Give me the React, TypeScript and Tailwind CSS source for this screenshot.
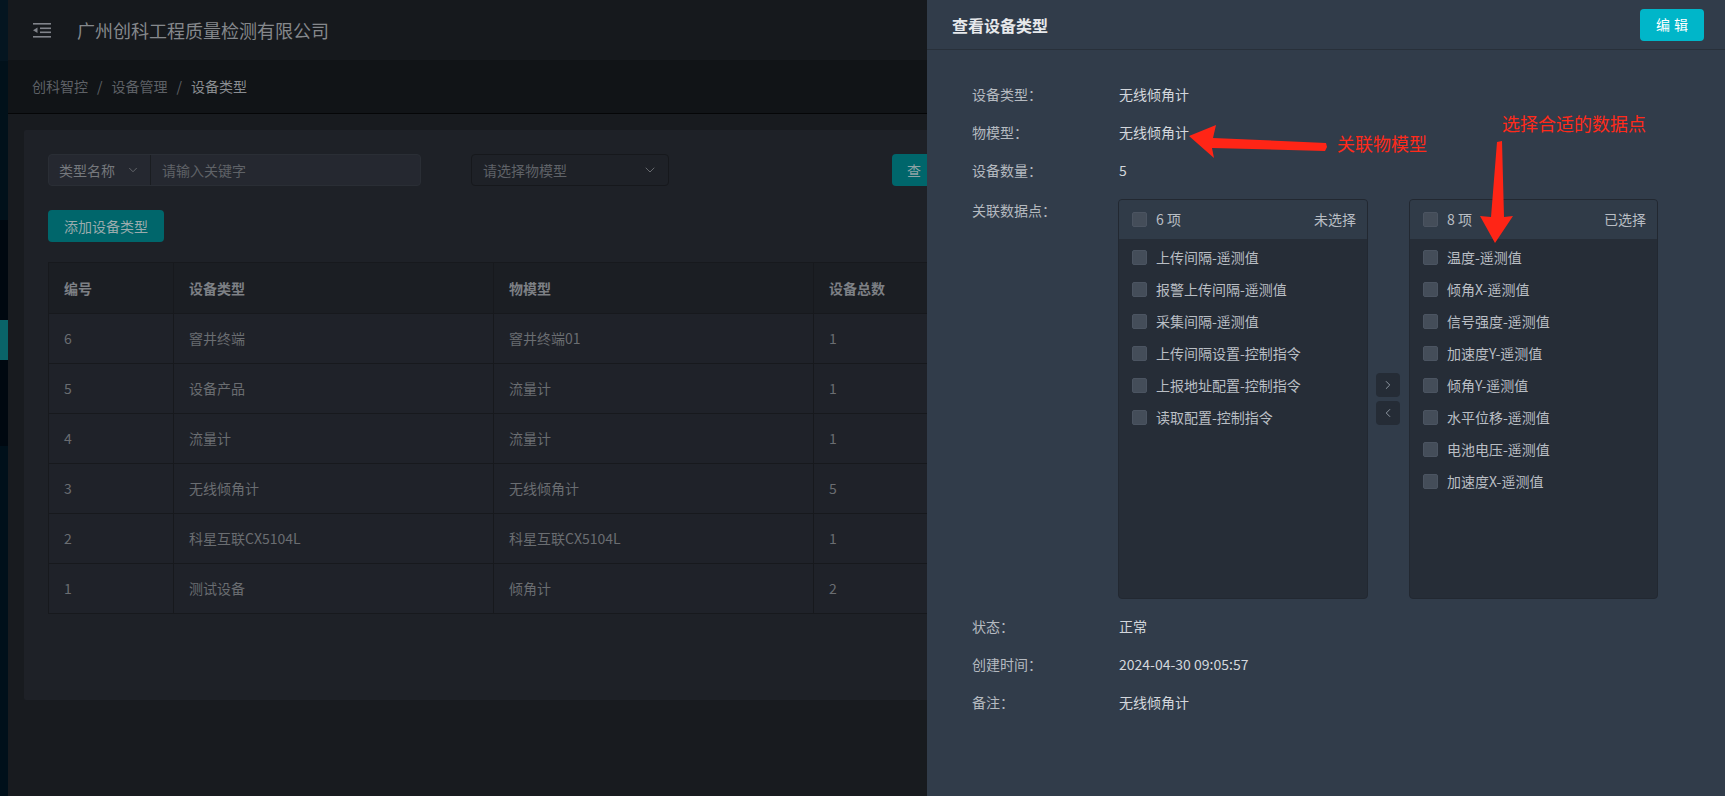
import { ChevronDown, ChevronLeft, ChevronRight } from 'lucide-react';

const font = { fontFamily: '"Noto Sans CJK SC", "Noto Sans", sans-serif' };

const rows = [
  { id: '6', type: '窨井终端', model: '窨井终端01', total: '1' },
  { id: '5', type: '设备产品', model: '流量计', total: '1' },
  { id: '4', type: '流量计', model: '流量计', total: '1' },
  { id: '3', type: '无线倾角计', model: '无线倾角计', total: '5' },
  { id: '2', type: '科星互联CX5104L', model: '科星互联CX5104L', total: '1' },
  { id: '1', type: '测试设备', model: '倾角计', total: '2' },
];

const unselected = [
  '上传间隔-遥测值',
  '报警上传间隔-遥测值',
  '采集间隔-遥测值',
  '上传间隔设置-控制指令',
  '上报地址配置-控制指令',
  '读取配置-控制指令',
];

const selected = [
  '温度-遥测值',
  '倾角X-遥测值',
  '信号强度-遥测值',
  '加速度Y-遥测值',
  '倾角Y-遥测值',
  '水平位移-遥测值',
  '电池电压-遥测值',
  '加速度X-遥测值',
];

const FoldIcon = () => (
  <svg width="18" height="16" viewBox="0 0 18 16" fill="none">
    <rect x="0" y="1" width="18" height="1.6" fill="#80838a" />
    <rect x="7" y="5.5" width="11" height="1.6" fill="#80838a" />
    <rect x="7" y="9.5" width="11" height="1.6" fill="#80838a" />
    <rect x="0" y="14" width="18" height="1.6" fill="#80838a" />
    <path d="M0 8.3 L4.5 5.5 L4.5 11.1 Z" fill="#80838a" />
  </svg>
);

const Box = () => (
  <span className="inline-block w-[15px] h-[15px] rounded-[2px] bg-[#444d59] border border-[#4b5461] shrink-0" />
);

const TransferPanel = ({ count, title, items, width }: { count: number; title: string; items: string[]; width: string }) => (
  <div className={`${width} h-[400px] rounded-[4px] bg-[#262d37] border border-[#222831] flex flex-col overflow-hidden`}>
    <div className="h-[39px] bg-[#303b48] flex items-center justify-between pl-[13px] pr-[11px] text-[14px] text-[#b9bec4] shrink-0">
      <div className="flex items-center gap-[9px]">
        <Box />
        <span>{count} 项</span>
      </div>
      <span>{title}</span>
    </div>
    <div className="pt-[2px]">
      {items.map((item) => (
        <div key={item} className="h-[32px] flex items-center gap-[9px] pl-[13px] text-[14px] text-[#b9bec4]">
          <Box />
          <span>{item}</span>
        </div>
      ))}
    </div>
  </div>
);

const InfoRow = ({ label, value }: { label: string; value: string }) => (
  <div className="h-[38px] flex items-center text-[14px]">
    <span className="w-[147px] text-[#b5bac0]">{label}</span>
    <span className="text-[#d3d7dc]">{value}</span>
  </div>
);

export default function App() {
  return (
    <div className="relative w-[1725px] h-[796px] overflow-hidden flex bg-[#181b1f]" style={font}>
      {/* sidebar strip */}
      <div className="w-[8px] flex flex-col shrink-0">
        <div className="h-[61px] bg-[#041520]" />
        <div className="h-[159px] bg-[#01111a]" />
        <div className="h-[100px] bg-[#000810]" />
        <div className="h-[40px] bg-[#0a6468]" />
        <div className="h-[86px] bg-[#000810]" />
        <div className="flex-1 bg-[#00101a]" />
      </div>

      <div className="flex-1 flex flex-col">
        <div className="h-[60px] bg-[#16191d] flex items-center pl-[25px] shrink-0">
          <FoldIcon />
          <span className="ml-[26px] text-[18px] text-[#85888c]">广州创科工程质量检测有限公司</span>
        </div>
        <div className="h-[54px] bg-[#111417] border-b border-[#050607] flex items-center pl-[24px] text-[14px] shrink-0">
          <span className="text-[#5e6166]">创科智控</span>
          <span className="mx-[9px] text-[#5e6166]">/</span>
          <span className="text-[#5e6166]">设备管理</span>
          <span className="mx-[9px] text-[#5e6166]">/</span>
          <span className="text-[#8a8d91]">设备类型</span>
        </div>

        <div className="flex-1 pl-[16px] pr-[16px] pt-[16px]">
          <div className="h-[570px] bg-[#1e2127] rounded-[2px] p-[24px]">
            <div className="flex items-center h-[32px]">
              <div className="w-[373px] h-[32px] flex rounded-[4px] border border-[#2a2e35] bg-[#252830] text-[14px]">
                <div className="w-[102px] flex items-center justify-between pl-[10px] pr-[10px] border-r border-[#1a1d21] text-[#75787d]">
                  <span>类型名称</span>
                  <ChevronDown size={14} strokeWidth={1.5} className="text-[#6b6e72]" />
                </div>
                <div className="flex items-center pl-[11px] text-[#5f6267]">请输入关键字</div>
              </div>
              <div className="ml-[50px] w-[198px] h-[32px] flex items-center justify-between rounded-[4px] border border-[#16181c] bg-[#1e2127] pl-[11px] pr-[10px] text-[14px] text-[#5f6267]">
                <span>请选择物模型</span>
                <ChevronDown size={16} strokeWidth={1.5} className="text-[#66696e]" />
              </div>
              <div className="ml-[223px] h-[32px] px-[15px] rounded-[4px] bg-[#00666b] flex items-center text-[14px] text-[#8fa3a5] tracking-[6px]">
                查询
              </div>
            </div>

            <div className="mt-[24px] w-[116px] h-[32px] rounded-[4px] bg-[#00666b] flex items-center justify-center text-[14px] text-[#9aabad]">
              添加设备类型
            </div>

            <div className="mt-[20px] border border-[#17191d]">
              <div className="flex h-[50px] bg-[#1b1e23] text-[14px] font-bold text-[#7d8085]">
                <div className="w-[125px] pl-[15px] flex items-center border-r border-[#17191d]">编号</div>
                <div className="w-[320px] pl-[15px] flex items-center border-r border-[#17191d]">设备类型</div>
                <div className="w-[320px] pl-[15px] flex items-center border-r border-[#17191d]">物模型</div>
                <div className="w-[260px] pl-[15px] flex items-center border-r border-[#17191d]">设备总数</div>
                <div className="w-[200px] pl-[15px] flex items-center border-r border-[#17191d]">状态</div>
                <div className="flex-1 pl-[15px] flex items-center">操作</div>
              </div>
              {rows.map((r) => (
                <div key={r.id} className="flex h-[50px] border-t border-[#17191d] bg-[#1f2229] text-[14px] text-[#6a6d71]">
                  <div className="w-[125px] pl-[15px] flex items-center border-r border-[#17191d]">{r.id}</div>
                  <div className="w-[320px] pl-[15px] flex items-center border-r border-[#17191d]">{r.type}</div>
                  <div className="w-[320px] pl-[15px] flex items-center border-r border-[#17191d]">{r.model}</div>
                  <div className="w-[260px] pl-[15px] flex items-center border-r border-[#17191d]">{r.total}</div>
                  <div className="w-[200px] pl-[15px] flex items-center border-r border-[#17191d]">正常</div>
                  <div className="flex-1 pl-[15px] flex items-center" />
                </div>
              ))}
            </div>
          </div>
        </div>
      </div>

      {/* drawer */}
      <div className="absolute right-0 top-0 w-[798px] h-[796px] bg-[#313c4a] flex flex-col">
        <div className="h-[50px] border-b border-[#28303a] flex items-center justify-between pl-[25px] pr-[21px] shrink-0">
          <span className="text-[16px] font-bold text-[#e6e8eb]">查看设备类型</span>
          <div className="w-[64px] h-[32px] rounded-[4px] bg-[#00b6c9] flex items-center justify-center text-[14px] text-white tracking-[4px] pl-[4px]">
            编辑
          </div>
        </div>
        <div className="pt-[25px] pl-[45px]">
          <InfoRow label="设备类型：" value="无线倾角计" />
          <InfoRow label="物模型：" value="无线倾角计" />
          <InfoRow label="设备数量：" value="5" />
          <div className="flex mt-[10px] mb-[8px] text-[14px]">
            <span className="w-[146px] leading-[22px] text-[#b5bac0]">关联数据点：</span>
            <div className="flex items-center">
              <TransferPanel count={6} title="未选择" items={unselected} width="w-[250px]" />
              <div className="flex flex-col gap-[4px] ml-[8px] mr-[9px]">
                <div className="w-[24px] h-[24px] rounded-[4px] bg-[#252c36] flex items-center justify-center text-[#9aa3ad]">
                  <ChevronRight size={14} strokeWidth={1.5} />
                </div>
                <div className="w-[24px] h-[24px] rounded-[4px] bg-[#252c36] flex items-center justify-center text-[#9aa3ad]">
                  <ChevronLeft size={14} strokeWidth={1.5} />
                </div>
              </div>
              <TransferPanel count={8} title="已选择" items={selected} width="w-[249px]" />
            </div>
          </div>
          <InfoRow label="状态：" value="正常" />
          <InfoRow label="创建时间：" value="2024-04-30 09:05:57" />
          <InfoRow label="备注：" value="无线倾角计" />
        </div>
      </div>

      {/* annotations */}
      <svg className="absolute left-0 top-0 pointer-events-none" width="1725" height="796">
        <polygon
          points="1189,136 1216,125 1213,138 1326,143 1327,147 1325,151 1212,148 1214,158"
          fill="#ff2516"
        />
        <polygon
          points="1497,142 1502,141 1504,217 1513,216 1495,243 1480,216 1491,217"
          fill="#ff2516"
        />
      </svg>
      <span className="absolute left-[1337px] top-[131px] text-[18px] leading-[24px] text-[#ff2a1a]">关联物模型</span>
      <span className="absolute left-[1502px] top-[111px] text-[18px] leading-[24px] text-[#ff2a1a]">选择合适的数据点</span>
    </div>
  );
}
